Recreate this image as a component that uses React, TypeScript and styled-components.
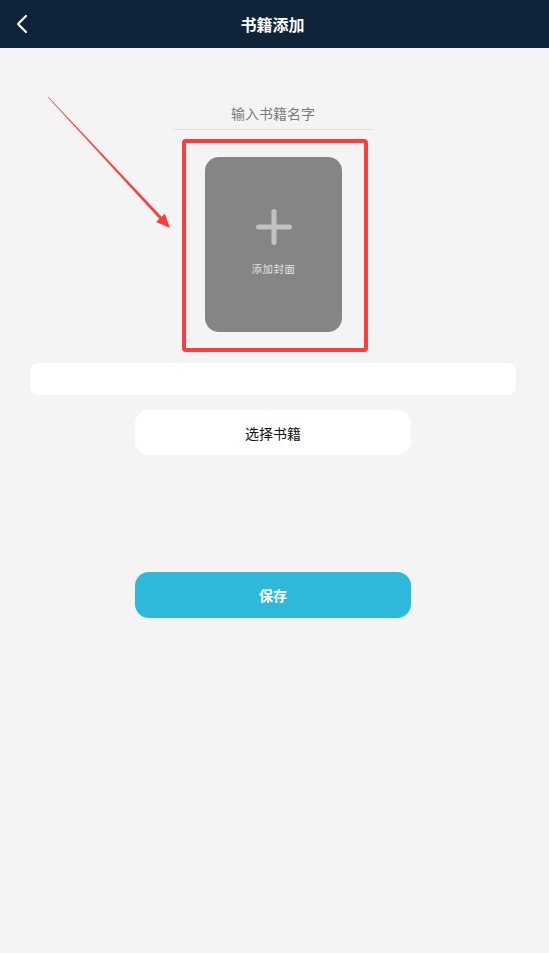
import React from "react";
import styled, { createGlobalStyle } from "styled-components";

const GlobalStyle = createGlobalStyle`
  html, body {
    margin: 0;
    padding: 0;
    background: #f4f4f4;
    font-family: "Noto Sans CJK SC", "Noto Sans", sans-serif;
  }
  * {
    box-sizing: border-box;
  }
`;

const Screen = styled.div`
  position: relative;
  min-height: 953px;
  background: #f4f4f4;
`;

const Header = styled.header`
  display: grid;
  grid-template-columns: 60px 1fr 60px;
  align-items: center;
  height: 48px;
  background: #0f2439;
`;

const BackButton = styled.div`
  display: flex;
  align-items: center;
  padding-left: 14px;
  height: 48px;
`;

const Title = styled.h1`
  margin: 0;
  text-align: center;
  color: #ffffff;
  font-size: 16px;
  font-weight: 700;
  transform: translateX(-2px);
`;

const Main = styled.main`
  width: 546px;
  display: flex;
  flex-direction: column;
  align-items: center;
`;

const NameInput = styled.input`
  margin-top: 52px;
  width: 200px;
  height: 30px;
  padding: 0 0 4px;
  border: none;
  border-bottom: 1px solid #e0e0e0;
  background: transparent;
  text-align: center;
  font-family: inherit;
  font-size: 14px;
  color: #333;
  outline: none;
  &::placeholder {
    color: #7c7c7c;
  }
`;

const CoverFrame = styled.div`
  margin-top: 9px;
  margin-left: 4px;
  width: 186px;
  height: 213px;
  border: 4px solid #ff3c3c;
  border-radius: 4px;
  padding: 14px 0 0 19px;
`;

const CoverCard = styled.div`
  width: 137px;
  height: 175px;
  border-radius: 14px;
  background: #858585;
  display: flex;
  flex-direction: column;
  align-items: center;
  padding-top: 52px;
`;

const CoverLabel = styled.span`
  margin-top: 16px;
  font-size: 10.5px;
  font-weight: 500;
  color: #d6d6d6;
  letter-spacing: 0.5px;
`;

const WhiteBar = styled.div`
  margin-top: 11px;
  width: 486px;
  height: 32px;
  background: #ffffff;
  border-radius: 8px;
`;

const ActionButton = styled.button<{ $primary?: boolean }>`
  width: 276px;
  height: ${(p) => (p.$primary ? "46px" : "45px")};
  margin-top: ${(p) => (p.$primary ? "117px" : "15px")};
  border: none;
  border-radius: 14px;
  background: ${(p) => (p.$primary ? "#2eb9db" : "#ffffff")};
  color: ${(p) => (p.$primary ? "#ffffff" : "#111111")};
  font-family: inherit;
  font-size: 14px;
  font-weight: ${(p) => (p.$primary ? 700 : 400)};
  cursor: pointer;
`;

const Annotation = styled.svg`
  position: absolute;
  left: 0;
  top: 0;
  pointer-events: none;
`;

const App = () => {
  return (
    <Screen>
      <GlobalStyle />
      <Header>
        <BackButton>
          <svg width="16" height="22" viewBox="0 0 16 22">
            <path
              d="M12 3 L4 11 L12 19"
              fill="none"
              stroke="#ffffff"
              strokeWidth="2.2"
              strokeLinecap="round"
              strokeLinejoin="round"
            />
          </svg>
        </BackButton>
        <Title>书籍添加</Title>
        <div />
      </Header>
      <Main>
        <NameInput placeholder="输入书籍名字" />
        <CoverFrame>
          <CoverCard>
            <svg width="36" height="36" viewBox="0 0 36 36">
              <path
                d="M18 2.5 V33.5 M2.5 18 H33.5"
                stroke="#c2c2c2"
                strokeWidth="5"
                strokeLinecap="round"
              />
            </svg>
            <CoverLabel>添加封面</CoverLabel>
          </CoverCard>
        </CoverFrame>
        <WhiteBar />
        <ActionButton>选择书籍</ActionButton>
        <ActionButton $primary>保存</ActionButton>
      </Main>
      <Annotation width="549" height="300" viewBox="0 0 549 300">
        <polygon
          points="48.2,96.8 161.6,216.8 164.9,213.7 170,228 156.1,221.9 159.4,218.8 47.8,97.2"
          fill="#ff3c3c"
        />
      </Annotation>
    </Screen>
  );
};

export default App;
